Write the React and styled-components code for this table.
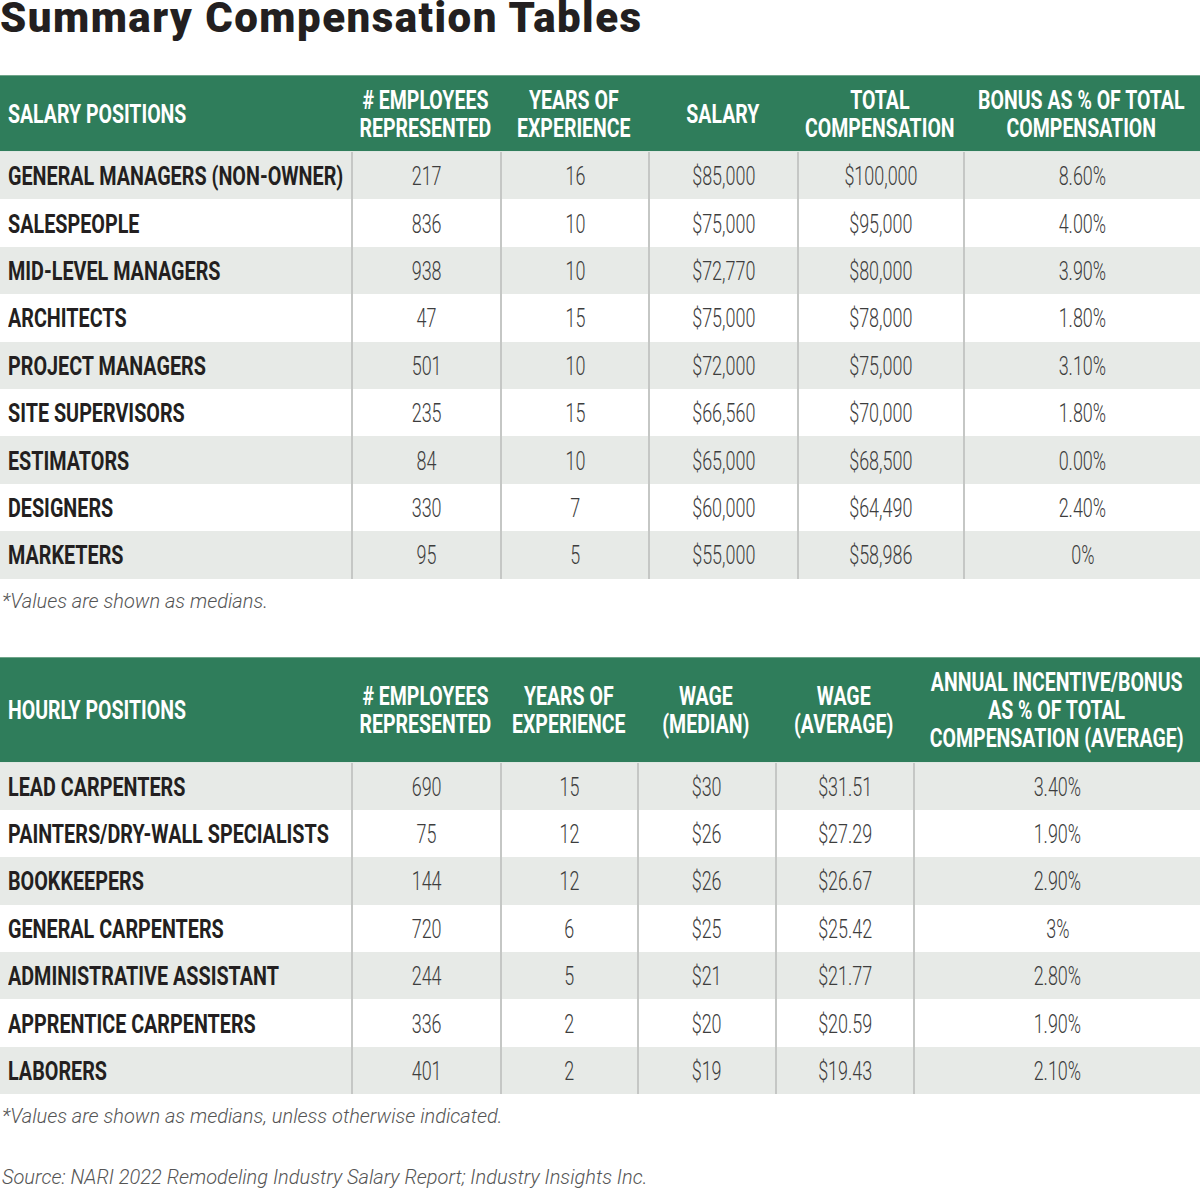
import React from 'react';
import styled, { createGlobalStyle } from 'styled-components';

const SANS = `Roboto, "Noto Sans", "Liberation Sans", sans-serif`;

const Global = createGlobalStyle`
  html, body { margin: 0; padding: 0; background: #fff; }
  body { width: 1200px; }
`;

const Page = styled.div`
  width: 1200px;
  height: 1189px;
  display: flex;
  flex-direction: column;
  overflow: hidden;
`;

const Title = styled.h1`
  margin: 0 0 39px 0;
  font-family: ${SANS};
  font-weight: 900;
  font-size: 42px;
  line-height: 36px;
  color: #231f20;
  letter-spacing: 1.5px;
`;

const Grid = styled.div`
  display: grid;
  grid-template-columns: ${(p) => p.$cols};
  grid-template-rows: ${(p) => p.$head}px repeat(${(p) => p.$rows}, 47.4px);
  border-top: 1px solid #6fa58a;
`;

/* condensed text: the installed families have no condensed cut, so narrow the glyphs */
const Txt = styled.span`
  display: inline-block;
  white-space: pre;
  transform: scaleX(${(p) => p.$sx});
  transform-origin: ${(p) => (p.$left ? 'left center' : 'center center')};
`;

const Head = styled.div`
  background: #2f7d5b;
  color: #fff;
  font-family: ${SANS};
  font-weight: 700;
  font-size: 25px;
  line-height: 28px;
  display: flex;
  align-items: center;
  justify-content: ${(p) => (p.$first ? 'flex-start' : 'center')};
  text-align: ${(p) => (p.$first ? 'left' : 'center')};
  padding: 3px 0 0 ${(p) => (p.$first ? '8px' : '0')};
  border-bottom: 1px solid #dfe7e2;
`;

const Cell = styled.div`
  background: ${(p) => (p.$shade ? '#e7eae7' : '#ffffff')};
  border-left: ${(p) => (p.$first ? 'none' : '2px solid #c5c7c5')};
  display: flex;
  align-items: center;
  justify-content: ${(p) => (p.$first ? 'flex-start' : 'center')};
  padding: 1px 0 0 ${(p) => (p.$first ? '8px' : '0')};
  font-family: ${SANS};
  font-size: 26px;
  font-weight: ${(p) => (p.$first ? 700 : 300)};
  color: ${(p) => (p.$first ? '#231f20' : '#3d3d3d')};
  white-space: nowrap;
`;

const Note = styled.p`
  margin: ${(p) => p.$m};
  font-family: ${SANS};
  font-style: italic;
  font-weight: 300;
  font-size: 20px;
  line-height: 24px;
  color: #555;
  padding-left: 2px;
`;

const salaryHead = [
  'SALARY POSITIONS',
  '# EMPLOYEES\nREPRESENTED',
  'YEARS OF\nEXPERIENCE',
  'SALARY',
  'TOTAL\nCOMPENSATION',
  'BONUS AS % OF TOTAL\nCOMPENSATION',
];

const salaryRows = [
  ['GENERAL MANAGERS (NON-OWNER)', '217', '16', '$85,000', '$100,000', '8.60%'],
  ['SALESPEOPLE', '836', '10', '$75,000', '$95,000', '4.00%'],
  ['MID-LEVEL MANAGERS', '938', '10', '$72,770', '$80,000', '3.90%'],
  ['ARCHITECTS', '47', '15', '$75,000', '$78,000', '1.80%'],
  ['PROJECT MANAGERS', '501', '10', '$72,000', '$75,000', '3.10%'],
  ['SITE SUPERVISORS', '235', '15', '$66,560', '$70,000', '1.80%'],
  ['ESTIMATORS', '84', '10', '$65,000', '$68,500', '0.00%'],
  ['DESIGNERS', '330', '7', '$60,000', '$64,490', '2.40%'],
  ['MARKETERS', '95', '5', '$55,000', '$58,986', '0%'],
];

const hourlyHead = [
  'HOURLY POSITIONS',
  '# EMPLOYEES\nREPRESENTED',
  'YEARS OF\nEXPERIENCE',
  'WAGE\n(MEDIAN)',
  'WAGE\n(AVERAGE)',
  'ANNUAL INCENTIVE/BONUS\nAS % OF TOTAL\nCOMPENSATION (AVERAGE)',
];

const hourlyRows = [
  ['LEAD CARPENTERS', '690', '15', '$30', '$31.51', '3.40%'],
  ['PAINTERS/DRY-WALL SPECIALISTS', '75', '12', '$26', '$27.29', '1.90%'],
  ['BOOKKEEPERS', '144', '12', '$26', '$26.67', '2.90%'],
  ['GENERAL CARPENTERS', '720', '6', '$25', '$25.42', '3%'],
  ['ADMINISTRATIVE ASSISTANT', '244', '5', '$21', '$21.77', '2.80%'],
  ['APPRENTICE CARPENTERS', '336', '2', '$20', '$20.59', '1.90%'],
  ['LABORERS', '401', '2', '$19', '$19.43', '2.10%'],
];

function DataTable({ cols, head, headHeight, rows }) {
  return (
    <Grid $cols={cols} $head={headHeight} $rows={rows.length}>
      {head.map((h, i) => (
        <Head key={'h' + i} $first={i === 0}>
          <Txt $sx={0.78} $left={i === 0}>{h}</Txt>
        </Head>
      ))}
      {rows.map((r, ri) =>
        r.map((v, ci) => (
          <Cell key={ri + '-' + ci} $first={ci === 0} $shade={ri % 2 === 0}>
            <Txt $sx={ci === 0 ? 0.76 : 0.69} $left={ci === 0}>{v}</Txt>
          </Cell>
        ))
      )}
    </Grid>
  );
}

export default function App() {
  return (
    <>
      <Global />
      <Page>
        <Title>Summary Compensation Tables</Title>
        <DataTable cols="351px 149px 148px 149px 166px 237px" head={salaryHead} headHeight={76} rows={salaryRows} />
        <Note $m="10px 0 44px 0">*Values are shown as medians.</Note>
        <DataTable cols="351px 149px 137px 138px 138px 287px" head={hourlyHead} headHeight={105} rows={hourlyRows} />
        <Note $m="10px 0 0 0">*Values are shown as medians, unless otherwise indicated.</Note>
        <Note $m="37px 0 0 0">Source: NARI 2022 Remodeling Industry Salary Report; Industry Insights Inc.</Note>
      </Page>
    </>
  );
}
